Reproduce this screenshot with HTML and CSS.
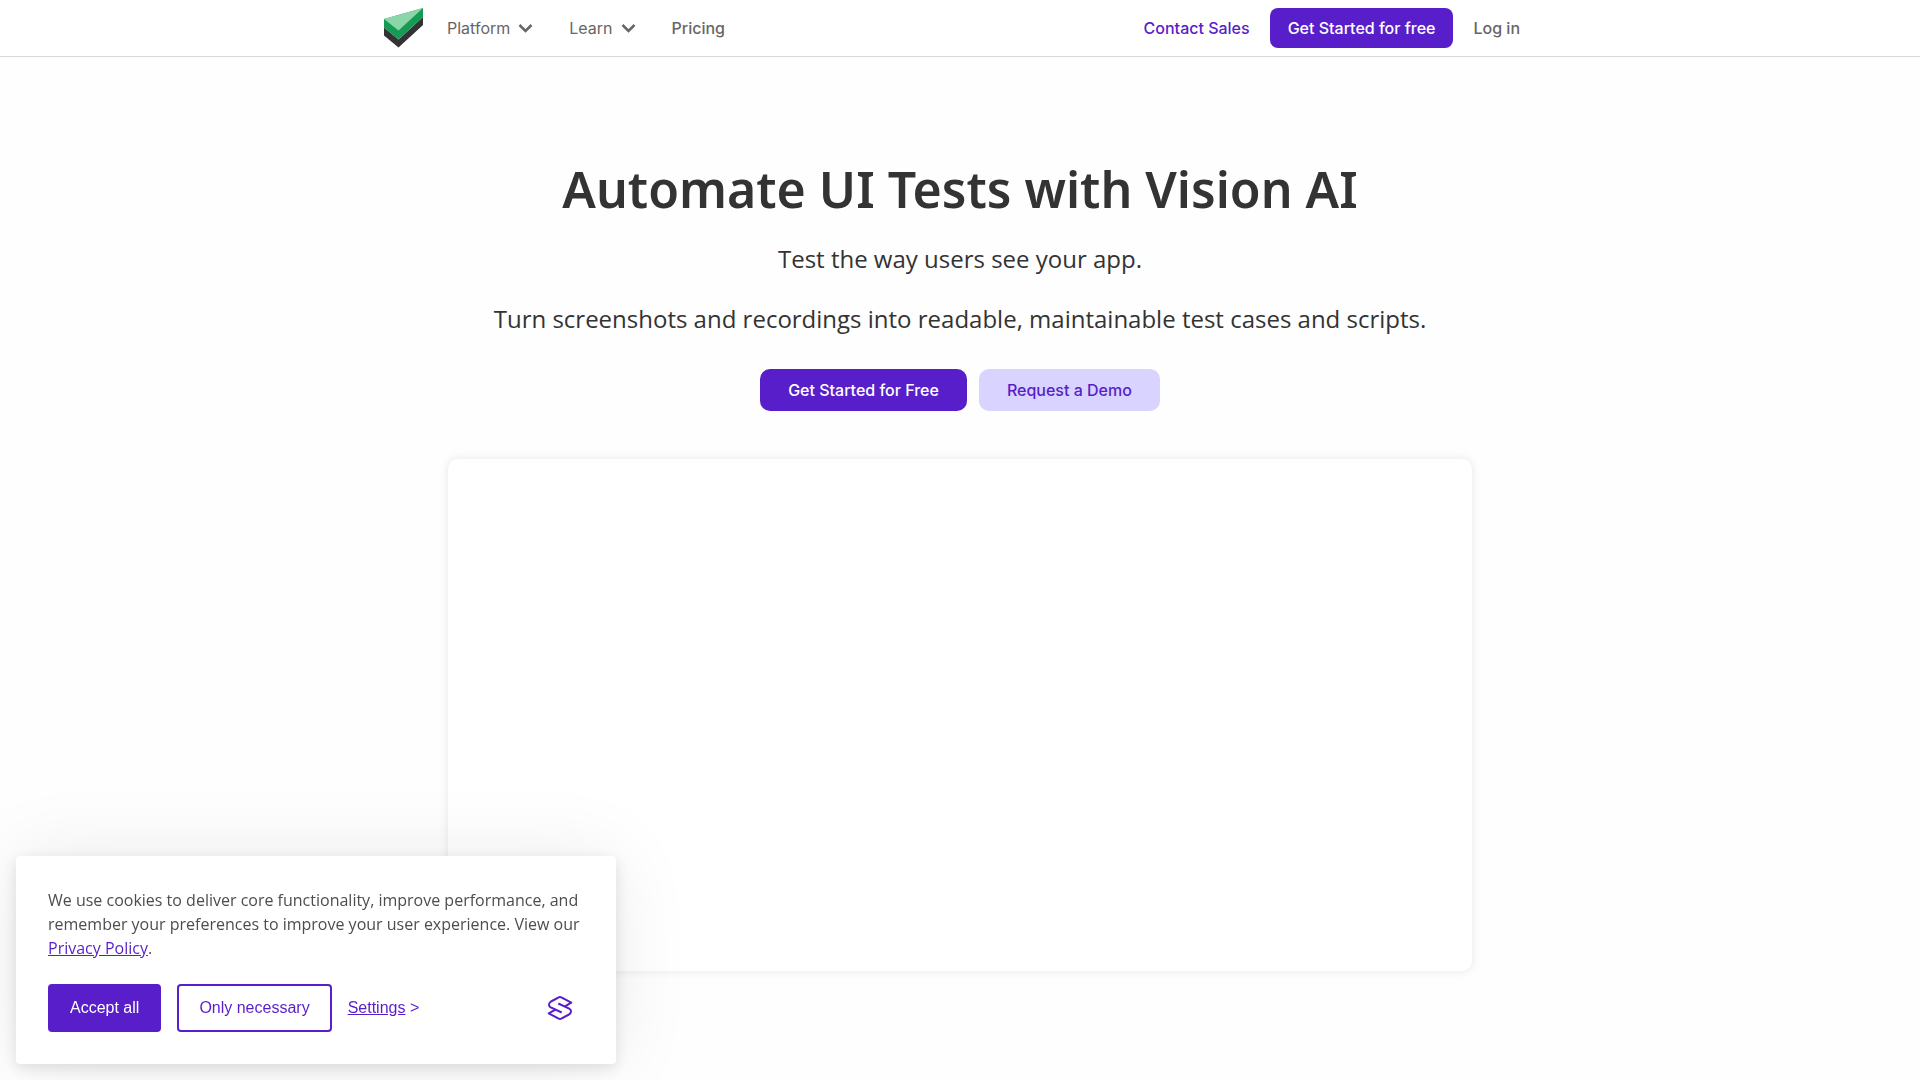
FILE: index.html
```html
<!DOCTYPE html>
<html lang="en">
<head>
  <meta charset="UTF-8">
  <meta name="viewport" content="width=device-width, initial-scale=1.0">
  <title>Automate UI Tests with Vision AI</title>
  <link rel="stylesheet" href="styles.css">
</head>
<body>
  <header class="header">
    <nav class="nav">
      <a class="logo" href="#" aria-label="Home">
        <svg width="40" height="40" viewBox="0 0 40 40">
          <path fill="#333333" d="M0 19.500 L14.500 31.500 L39 9 V17 L14.500 39.500 L0 27.500 Z"/>
          <path fill="#169b55" d="M0 11 L39 0 V9 L14.500 31.500 L0 19.500 Z"/>
          <path fill="#8ad6a9" d="M0 11 L39 0 L14.500 22.500 Z"/>
        </svg>
      </a>
      <button class="nav-menu" type="button">Platform
        <svg class="chevron" width="15" height="10" viewBox="0 0 15 10"><path d="M1.500 2l6 6 6-6"/></svg>
      </button>
      <button class="nav-menu" type="button">Learn
        <svg class="chevron" width="15" height="10" viewBox="0 0 15 10"><path d="M1.500 2l6 6 6-6"/></svg>
      </button>
      <a class="nav-link" href="#">Pricing</a>
      <div class="nav-right">
        <a class="nav-sales" href="#">Contact Sales</a>
        <a class="nav-cta" href="#">Get Started for free</a>
        <a class="nav-link" href="#">Log in</a>
      </div>
    </nav>
  </header>

  <main class="hero">
    <h1>Automate UI Tests with Vision AI</h1>
    <p>Test the way users see your app.</p>
    <p>Turn screenshots and recordings into readable, maintainable test cases and scripts.</p>
    <div class="hero-actions">
      <a class="btn btn-primary" href="#">Get Started for Free</a>
      <a class="btn btn-secondary" href="#">Request a Demo</a>
    </div>
    <div class="video"></div>
  </main>

  <!-- Cookie banner -->
  <section class="cookie" aria-label="Cookies">
    <p>We use cookies to deliver core functionality, improve performance, and remember your preferences to improve your user experience. View our <a href="#">Privacy Policy</a>.</p>
    <div class="cookie-actions">
      <button class="cookie-btn cookie-accept" type="button">Accept all</button>
      <button class="cookie-btn" type="button">Only necessary</button>
      <button class="cookie-settings" type="button"><span>Settings</span> &gt;</button>
      <a class="cookie-logo" href="#" aria-label="Cookie consent provider">
        <svg width="24" height="24" viewBox="0 0 24 24">
          <path d="M17 10.300 L23.300 6.700 L13.300 1.300 Q12 .6 10.700 1.300 L3 5.500 Q1 6.700 1 8.700 Q1 10.500 2.800 11.400 L13.700 16.500"/>
          <path d="M7.500 13.700 L.7 17.400 L10.700 22.700 Q12 23.400 13.300 22.700 L21 18.500 Q23 17.300 23 15.300 Q23 13.500 21.200 12.600 L10.300 7.500"/>
        </svg>
      </a>
    </div>
  </section>
</body>
</html>
```
FILE: styles.css
```css
* {
  box-sizing: border-box;
}

body {
  margin: 0;
  background: #fefefe;
  color: #333;
  font-family: "Open Sans", sans-serif;
  font-size: 16px;
}

a {
  color: #571ec9;
  text-decoration: none;
}

button {
  font: inherit;
  cursor: pointer;
}

/* Header */
.header {
  background: #fff;
  border-bottom: 1px solid #d9d9d9;
}

.nav {
  display: flex;
  align-items: center;
  max-width: 1152px;
  height: 56px;
  margin: 0 auto;
  padding-right: 16px;
  font-family: Inter, sans-serif;
}

.logo {
  display: flex;
  margin-right: 23px;
}

.nav-menu {
  display: flex;
  align-items: center;
  gap: 8px;
  margin-right: 36px;
  padding: 0;
  border: none;
  background: none;
  color: #666;
}

.chevron {
  fill: none;
  stroke: #666;
  stroke-width: 2.5;
}

.nav-link {
  color: #666;
  font-weight: 500;
}

.nav-right {
  display: flex;
  align-items: center;
  gap: 20px;
  margin-left: auto;
  font-weight: 500;
}

.nav-cta {
  padding: 0 18px;
  border-radius: 8px;
  background: #571ec9;
  color: #fff;
  line-height: 40px;
}

/* Hero */
.hero {
  display: flex;
  flex-direction: column;
  align-items: center;
  padding: 96px 16px;
  text-align: center;
}

.hero h1 {
  margin: 0 0 16px;
  font-family: "Noto Sans", sans-serif;
  font-size: 50px;
  font-weight: 600;
  line-height: 72px;
}

.hero p {
  margin: 0 0 24px;
  font-size: 24px;
  line-height: 36px;
}

.hero-actions {
  display: flex;
  gap: 12px;
  margin: 8px 0 48px;
}

.btn {
  padding: 0 28px;
  border-radius: 10px;
  font-family: Inter, sans-serif;
  font-weight: 500;
  line-height: 42px;
}

.btn-primary {
  background: #571ec9;
  color: #fff;
}

.btn-secondary {
  background: #d8d4ff;
}

.video {
  width: 100%;
  max-width: 1024px;
  aspect-ratio: 2;
  border-radius: 10px;
  background: #fff;
  box-shadow: 0 0 10px rgba(0, 0, 0, 0.1);
}

/* Cookie banner */
.cookie {
  position: fixed;
  bottom: 16px;
  left: 16px;
  width: 600px;
  padding: 32px;
  border-radius: 4px;
  background: #fff;
  box-shadow: 0 0 80px rgba(0, 0, 0, 0.08), 0 4px 16px rgba(0, 0, 0, 0.12);
}

.cookie p {
  margin: 0 0 24px;
  color: #4d4d4d;
  line-height: 24px;
}

.cookie p a {
  text-decoration: underline;
}

.cookie-actions {
  display: flex;
  align-items: center;
  gap: 16px;
  font-family: "Liberation Sans", Arial, sans-serif;
}

.cookie-btn {
  height: 48px;
  padding: 0 20px;
  border: 2px solid #571ec9;
  border-radius: 4px;
  background: #fff;
  color: #571ec9;
}

.cookie-accept {
  background: #571ec9;
  color: #fff;
}

.cookie-settings {
  padding: 0;
  border: none;
  background: none;
  color: #571ec9;
}

.cookie-settings span {
  text-decoration: underline;
}

.cookie-logo {
  display: flex;
  margin-left: auto;
  margin-right: 12px;
}

.cookie-logo svg {
  fill: none;
  stroke: #571ec9;
  stroke-width: 2;
  stroke-linejoin: round;
  overflow: visible;
}
```
